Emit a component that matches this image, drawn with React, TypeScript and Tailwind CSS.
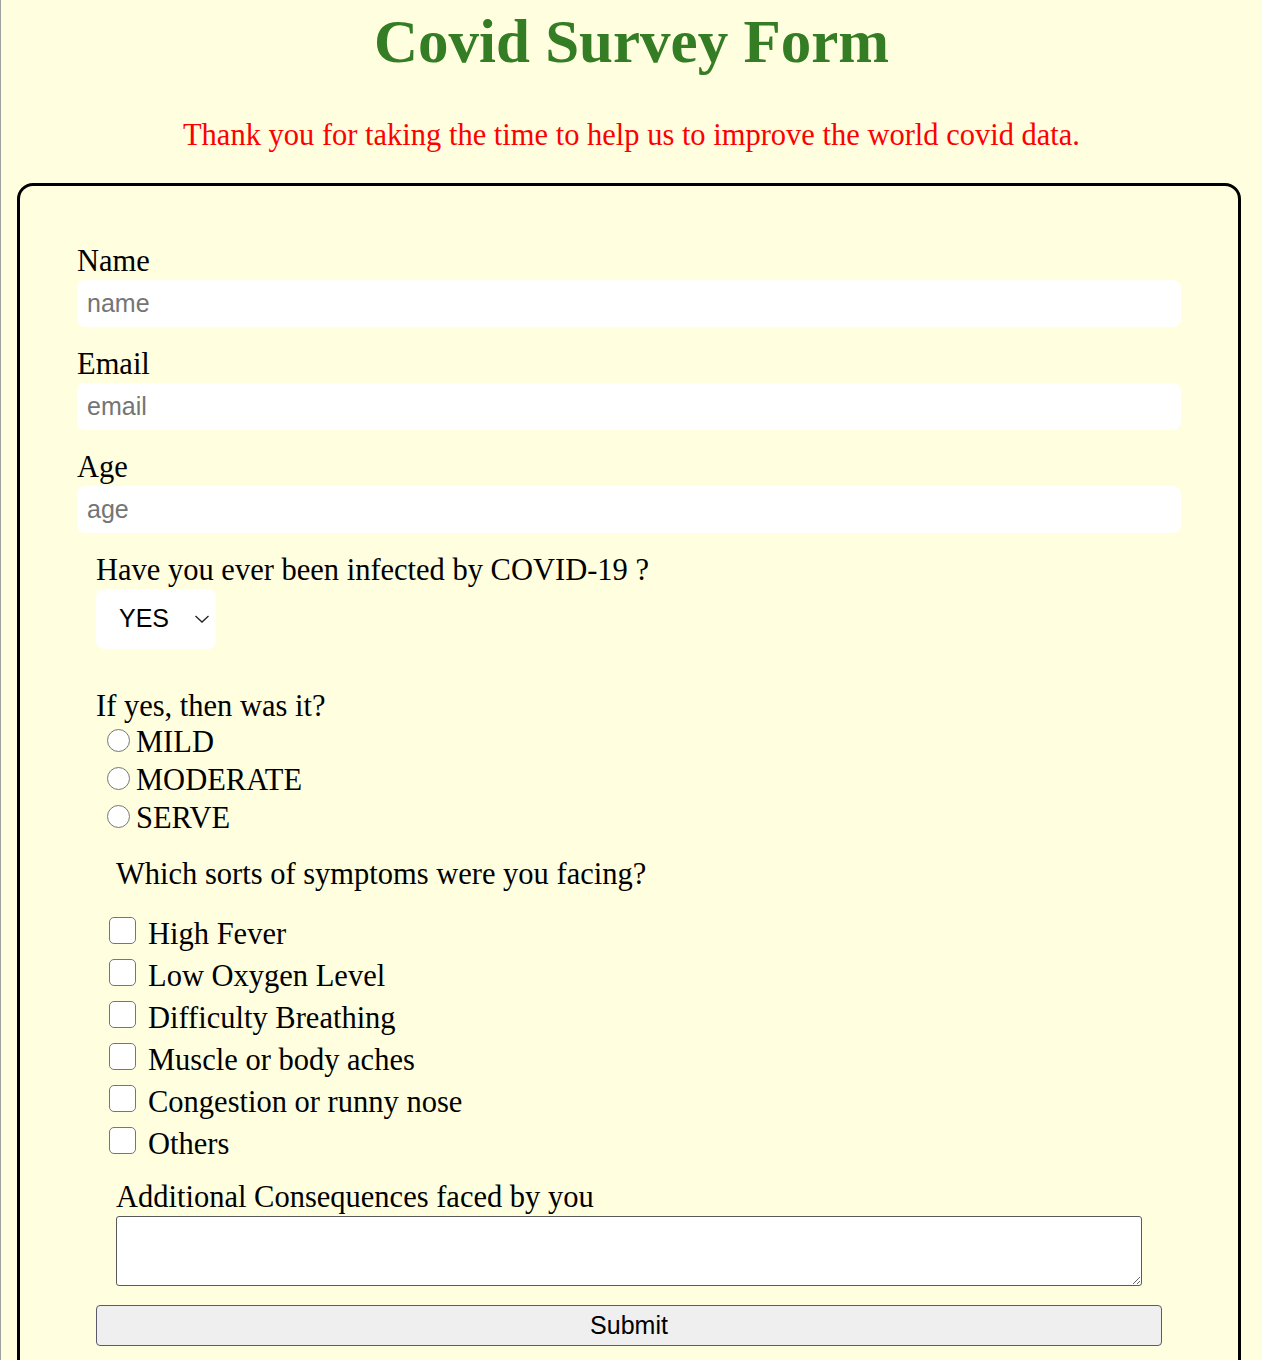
import React from 'react';

const serif = "font-['Liberation_Serif','Times_New_Roman',serif]";
const sans = "font-['Liberation_Sans',Arial,sans-serif]";

const symptoms = [
  'High Fever',
  'Low Oxygen Level',
  'Difficulty Breathing',
  'Muscle or body aches',
  'Congestion or runny nose',
  'Others',
];

const severities = ['MILD', 'MODERATE', 'SERVE'];

const Field: React.FC<{ label: string; placeholder: string; type?: string }> = ({ label, placeholder, type = 'text' }) => (
  <div className="mb-[20px]">
    <label className="block leading-[34px]">{label}</label>
    <input
      type={type}
      placeholder={placeholder}
      className={`mt-[2px] block h-[47px] w-full rounded-[8px] bg-white px-[10px] text-[25px] text-black placeholder:text-[#757575] outline-none ${sans}`}
    />
  </div>
);

const App: React.FC = () => {
  return (
    <div className={`min-h-screen border-l border-[#a0a0a0] bg-[#ffffe0] pt-[12px] text-[30.5px] text-black ${serif}`}>
      <h1 className="text-center text-[61px] font-bold leading-[60px] text-[#347d24]">Covid Survey Form</h1>
      <p className="mt-[46px] text-center leading-[34px] text-[#ff0000]">
        Thank you for taking the time to help us to improve the world covid data.
      </p>

      <form
        className="ml-[16px] mt-[31px] w-[1224px] rounded-[16px] border-[3px] border-black px-[57px] pb-[55px] pt-[58px]"
        onSubmit={(e) => e.preventDefault()}
      >
        <Field label="Name" placeholder="name" />
        <Field label="Email" placeholder="email" type="email" />
        <Field label="Age" placeholder="age" type="number" />

        <div className="pl-[19px]">
          <label className="block leading-[34px]">Have you ever been infected by COVID-19 ?</label>
          <div className="relative mt-[2px] h-[60px] w-[120px]">
            <select
              className={`block h-full w-full appearance-none rounded-[8px] bg-white pl-[23px] text-[25px] text-black outline-none ${sans}`}
              defaultValue="YES"
            >
              <option>YES</option>
              <option>NO</option>
            </select>
            <svg
              className="pointer-events-none absolute left-[98px] top-[24px]"
              width="16"
              height="12"
              viewBox="0 0 16 12"
              fill="none"
            >
              <path d="M1.5 3L8 9L14.5 3" stroke="#222" strokeWidth="1.3" />
            </svg>
          </div>

          <div className="mt-[40px] leading-[34px]">If yes, then was it?</div>
          <div className="flex flex-col">
            {severities.map((s) => (
              <label key={s} className="flex h-[38px] items-center pl-[11px]">
                <input
                  type="radio"
                  name="severity"
                  className="mb-[3px] h-[23px] w-[23px] appearance-none rounded-full border border-[#767676] bg-white"
                />
                <span className="ml-[6px] leading-[34px]">{s}</span>
              </label>
            ))}
          </div>
        </div>

        <div className="mt-[20px] pl-[39px] leading-[34px]">Which sorts of symptoms were you facing?</div>
        <div className="mt-[22px] flex flex-col pl-[32px]">
          {symptoms.map((s) => (
            <label key={s} className="flex h-[42px] items-center">
              <input
                type="checkbox"
                className="mb-[7px] h-[27px] w-[27px] appearance-none rounded-[5px] border border-[#767676] bg-white"
              />
              <span className="ml-[12px] leading-[34px]">{s}</span>
            </label>
          ))}
        </div>

        <div className="mt-[15px] px-[39px]">
          <label className="block leading-[34px]">Additional Consequences faced by you</label>
          <textarea className="mt-[2px] block h-[70px] w-full rounded-[3px] border border-[#5a5a5a] bg-white outline-none" />
        </div>

        <div className="mt-[19px] px-[19px]">
          <button
            type="submit"
            className={`block h-[41px] w-full rounded-[4px] border border-[#5a5a6a] bg-[#efefef] text-[25px] text-black ${sans}`}
          >
            Submit
          </button>
        </div>
      </form>
    </div>
  );
};

export default App;
